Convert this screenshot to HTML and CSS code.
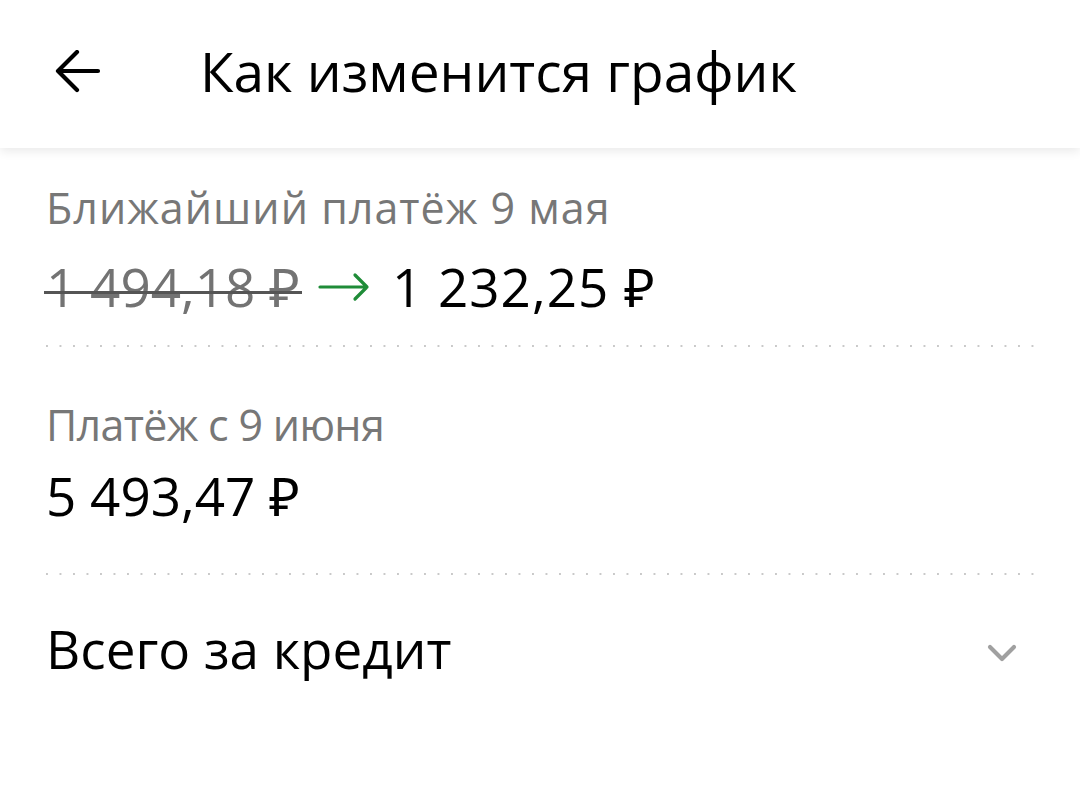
FILE: index.html
```html
<!DOCTYPE html>
<html lang="ru">
<head>
    <meta charset="UTF-8">
    <meta name="viewport" content="width=device-width, initial-scale=1.0">
    <title>Как изменится график</title>
    <link rel="stylesheet" href="styles.css">
</head>
<body>

<header class="topbar">
    <a class="back" href="#">
        <svg width="46" height="46" viewBox="0 0 46 46">
            <path d="M43 21H4M22 2L3 21l19 19" fill="none" stroke="#000" stroke-width="4.2" stroke-linecap="round" stroke-linejoin="round"/>
        </svg>
    </a>
    <h1 class="title">Как изменится график</h1>
</header>

<main class="content">
    <section class="row">
        <div class="label">Ближайший платёж 9 мая</div>
        <div class="amount amount-change">
            <span class="old">1 494,18 ₽</span>
            <svg class="arrow" width="52" height="30" viewBox="0 0 52 30">
                <path d="M2 15h47M37 3l12 12-12 12" fill="none" stroke="#1f8c38" stroke-width="3.2" stroke-linecap="round" stroke-linejoin="round"/>
            </svg>
            <span>1 232,25 ₽</span>
        </div>
    </section>
    <div class="dots dots-first"></div>

    <section class="row">
        <div class="label label-second">Платёж с 9 июня</div>
        <div class="amount">5 493,47 ₽</div>
    </section>
    <div class="dots dots-second"></div>

    <section class="total">
        <span>Всего за кредит</span>
        <svg class="chevron" width="32" height="22" viewBox="0 0 32 22">
            <path d="M4 5l12 12 12-12" fill="none" stroke="#a0a0a0" stroke-width="4.2" stroke-linecap="round" stroke-linejoin="round"/>
        </svg>
    </section>
</main>

</body>
</html>
```

FILE: styles.css
```css
body { margin: 0; font-family: "Open Sans", "Noto Sans", sans-serif; background: #fff; color: #000; }

.topbar { height: 148px; display: flex; align-items: center; background: #fff; box-shadow: 0 3px 10px rgba(0,0,0,0.09); position: relative; }
.back { display: flex; margin-left: 55px; margin-top: -2px; }
.title { margin: -6px 0 0 99px; font-size: 55px; font-weight: 400; line-height: 64px; }

.content { padding: 34px 45px 0 46px; }

.label { font-size: 43px; line-height: 52px; color: #777; letter-spacing: 1px; }
.label-second { letter-spacing: -0.7px; }
.amount { font-size: 53px; line-height: 60px; margin-top: 15px; }
.amount-change { display: flex; align-items: center; margin-top: 23px; }
.amount-change span:last-child { letter-spacing: 1px; }
.old { color: #737373; position: relative; }
.old::after { content: ""; position: absolute; left: -2px; right: -2px; top: 34px; height: 3px; background: #555; }
.arrow { margin: 0 22px 0 18px; }

.dots { height: 2px; background-image: linear-gradient(to right, #c9c9c9 2px, transparent 2px); background-size: 13.5px 2px; }
.dots-first { margin: 28px 0 52px; }
.dots-second { margin: 47px 0 42px; }

.total { display: flex; justify-content: space-between; align-items: center; font-size: 53px; line-height: 64px; }
.chevron { margin: 7px 17px 0 0; }
```
